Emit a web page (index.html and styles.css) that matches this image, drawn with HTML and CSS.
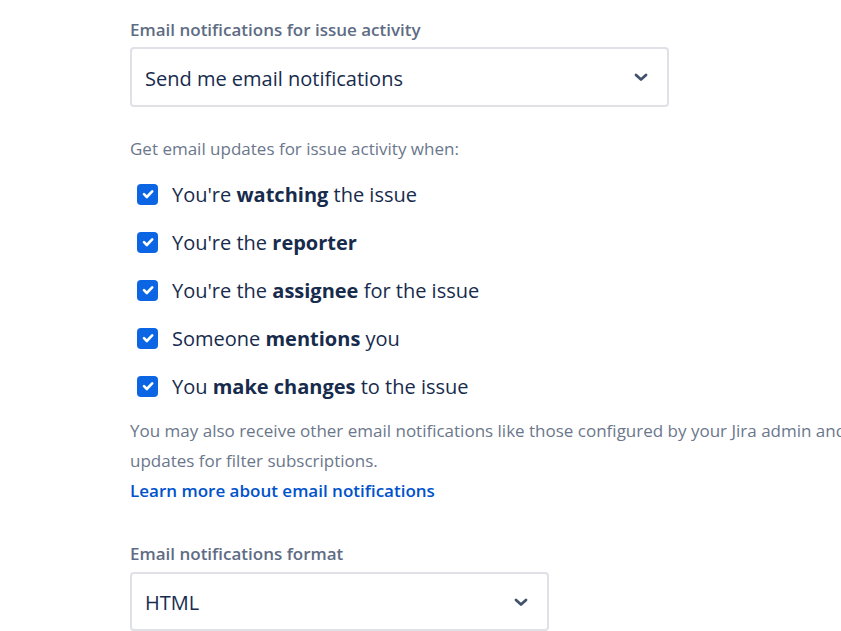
FILE: index.html
```html
<!DOCTYPE html>
<html lang="en">
<head>
<meta charset="utf-8">
<title>Email notifications</title>
<link rel="stylesheet" href="styles.css">
</head>
<body>
<main class="page">
  <div class="field-label">Email notifications for issue activity</div>
  <div class="select select-wide">
    <span class="select-value">Send me email notifications</span>
    <svg class="chevron" width="14" height="9" viewBox="0 0 14 9"><path d="M2 2l5 4.5L12 2" fill="none" stroke="#42526E" stroke-width="2.8" stroke-linecap="round" stroke-linejoin="round"/></svg>
  </div>

  <p class="helper">Get email updates for issue activity when:</p>
  <ul class="checks">
    <li class="check-row"><span class="box"><svg width="20" height="20" viewBox="0 0 20 20"><path d="M6 10.2l2.8 2.8L14.2 7.4" fill="none" stroke="#fff" stroke-width="2.6" stroke-linecap="round" stroke-linejoin="round"/></svg></span><span>You're <b>watching</b> the issue</span></li>
    <li class="check-row"><span class="box"><svg width="20" height="20" viewBox="0 0 20 20"><path d="M6 10.2l2.8 2.8L14.2 7.4" fill="none" stroke="#fff" stroke-width="2.6" stroke-linecap="round" stroke-linejoin="round"/></svg></span><span>You're the <b>reporter</b></span></li>
    <li class="check-row"><span class="box"><svg width="20" height="20" viewBox="0 0 20 20"><path d="M6 10.2l2.8 2.8L14.2 7.4" fill="none" stroke="#fff" stroke-width="2.6" stroke-linecap="round" stroke-linejoin="round"/></svg></span><span>You're the <b>assignee</b> for the issue</span></li>
    <li class="check-row"><span class="box"><svg width="20" height="20" viewBox="0 0 20 20"><path d="M6 10.2l2.8 2.8L14.2 7.4" fill="none" stroke="#fff" stroke-width="2.6" stroke-linecap="round" stroke-linejoin="round"/></svg></span><span>Someone <b>mentions</b> you</span></li>
    <li class="check-row"><span class="box"><svg width="20" height="20" viewBox="0 0 20 20"><path d="M6 10.2l2.8 2.8L14.2 7.4" fill="none" stroke="#fff" stroke-width="2.6" stroke-linecap="round" stroke-linejoin="round"/></svg></span><span>You <b>make changes</b> to the issue</span></li>
  </ul>

  <p class="note">You may also receive other email notifications like those configured by your Jira admin and updates for filter subscriptions.</p>
  <a class="learn" href="#">Learn more about email notifications</a>

  <div class="field-label second">Email notifications format</div>
  <div class="select select-narrow">
    <span class="select-value">HTML</span>
    <svg class="chevron" width="14" height="9" viewBox="0 0 14 9"><path d="M2 2l5 4.5L12 2" fill="none" stroke="#42526E" stroke-width="2.8" stroke-linecap="round" stroke-linejoin="round"/></svg>
  </div>
</main>
</body>
</html>
```

FILE: styles.css
```css
html, body {
  margin: 0;
  padding: 0;
  overflow: hidden;
  background: #ffffff;
}

body {
  font-family: "Open Sans", "Noto Sans", sans-serif;
  color: #172B4D;
}

.page {
  padding: 20px 0 0 130px;
  width: 760px;
}

.field-label {
  font-size: 17px;
  line-height: 20px;
  font-weight: 600;
  color: #5E6C84;
  margin-bottom: 7px;
}

.field-label.second {
  margin-top: 38px;
  margin-bottom: 8px;
}

.select {
  box-sizing: border-box;
  height: 60px;
  border: 2px solid #DFE1E6;
  border-radius: 4px;
  display: flex;
  align-items: center;
  justify-content: space-between;
  padding: 3px 19px 0 13px;
}

.select-wide { width: 539px; }
.select-narrow { width: 419px; height: 59px; }

.select-value {
  font-size: 20px;
  line-height: 24px;
  color: #172B4D;
}

.chevron { display: block; margin-top: -2px; }

.helper {
  margin: 32px 0 0;
  font-size: 17px;
  line-height: 20px;
  color: #6B778C;
}

.checks {
  list-style: none;
  margin: 11px 0 0;
  padding: 0;
}

.check-row {
  height: 48px;
  display: flex;
  align-items: center;
  font-size: 20px;
  color: #172B4D;
}

.check-row b { font-weight: 700; }

.box {
  width: 21px;
  height: 21px;
  margin-left: 7px;
  margin-right: 14px;
  border-radius: 4px;
  background: #0C66E4;
  display: flex;
  align-items: center;
  justify-content: center;
  flex-shrink: 0;
}

.box svg { display: block; }

.note {
  margin: 6px 0 0;
  font-size: 17px;
  line-height: 30px;
  color: #6B778C;
}

.learn {
  display: block;
  font-size: 17px;
  line-height: 30px;
  font-weight: 600;
  color: #0052CC;
  text-decoration: none;
}
```
